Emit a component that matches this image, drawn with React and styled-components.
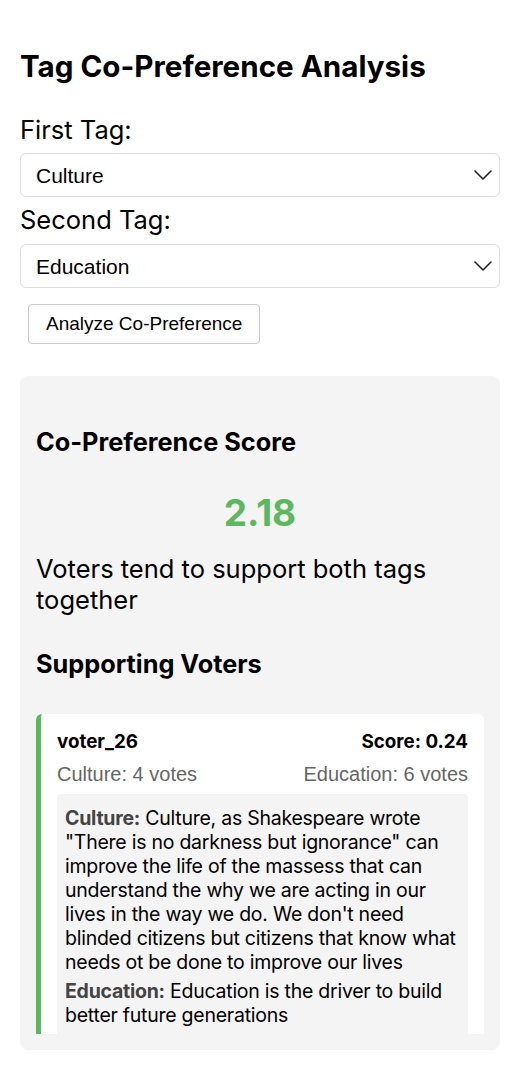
import React, { useState } from 'react'
import styled, { createGlobalStyle } from 'styled-components'

const GlobalStyle = createGlobalStyle`
 body {
  margin: 0;
  background: #ffffff;
  font-family: Inter, "Noto Sans", sans-serif;
  color: #000;
 }
`

const Page = styled.div`
 padding: 48px 20px 20px;
 display: flex;
 flex-direction: column;
`

const Title = styled.h1`
 margin: 0;
 font-size: 29.6px;
 line-height: 36px;
 font-weight: 700;
`

const Label = styled.label`
 display: block;
 margin-top: ${({ $top }) => $top}px;
 font-size: 25.5px;
 line-height: 29px;
`

const SelectWrap = styled.div`
 position: relative;
 margin-top: ${({ $top }) => $top}px;
`

const Select = styled.select`
 appearance: none;
 -webkit-appearance: none;
 width: 100%;
 height: 44px;
 box-sizing: border-box;
 border: 1px solid #dddddd;
 border-radius: 6px;
 background: #fff;
 padding: 0 40px 0 15px;
 font-family: "Liberation Sans", Arial, sans-serif;
 font-size: 21px;
 color: #000;
 outline: none;
`

const Chevron = styled.svg`
 position: absolute;
 right: 8px;
 top: 17px;
 pointer-events: none;
`

const Button = styled.button`
 align-self: flex-start;
 margin: 16px 0 0 8px;
 height: 40px;
 padding: 0 17px;
 background: #fff;
 border: 1px solid #cccccc;
 border-radius: 4px;
 font-family: "Liberation Sans", Arial, sans-serif;
 font-size: 19px;
 color: #000;
 cursor: pointer;
`

const Panel = styled.section`
 margin-top: 32px;
 background: #f4f4f4;
 border-radius: 8px;
 padding: 50px 16px 16px;
`

const Heading = styled.h3`
 margin: ${({ $top }) => $top || 0}px 0 0;
 font-size: 25.3px;
 line-height: 32px;
 font-weight: 700;
`

const ScoreValue = styled.div`
 margin-top: 33px;
 text-align: center;
 font-size: 37px;
 line-height: 44px;
 font-weight: 700;
 color: #5cb85c;
`

const Verdict = styled.p`
 margin: 18px 0 0;
 font-size: 25.5px;
 line-height: 31px;
`

const VoterList = styled.div`
 margin-top: 34px;
 max-height: 320px;
 overflow: hidden;
 display: flex;
 flex-direction: column;
 gap: 12px;
`

const Card = styled.div`
 background: #fff;
 border-left: 5px solid #5cb85c;
 border-radius: 6px;
 padding: 16px;
`

const Row = styled.div`
 display: flex;
 justify-content: space-between;
 align-items: baseline;
 margin-top: ${({ $top }) => $top || 0}px;
 line-height: 24px;
`

const Name = styled.span`
 font-size: 18.8px;
 font-weight: 700;
`

const Votes = styled.span`
 font-family: "Liberation Sans", Arial, sans-serif;
 font-size: 20px;
 color: #666666;
`

const Comments = styled.div`
 margin-top: 8px;
 background: #f4f4f4;
 border-radius: 4px;
 padding: 12px 7px 12px 8px;
 display: flex;
 flex-direction: column;
 gap: 5px;
`

const Comment = styled.p`
 margin: 0;
 font-size: 19.5px;
 letter-spacing: -0.25px;
 line-height: 24px;
`

const TagName = styled.strong`
 color: #444444;
`

const tags = ['Culture', 'Education', 'Environment', 'Health', 'Mobility']

const voters = [
  {
    id: 'voter_26',
    score: 0.24,
    first: 4,
    second: 6,
    firstText: 'Culture, as Shakespeare wrote "There is no darkness but ignorance" can improve the life of the massess that can understand the why we are acting in our lives in the way we do. We don\'t need blinded citizens but citizens that know what needs ot be done to improve our lives',
    secondText: 'Education is the driver to build better future generations',
  },
]

const TagSelect = ({ value, onChange, top }) => (
  <SelectWrap $top={top}>
    <Select value={value} onChange={e => onChange(e.target.value)}>
      {tags.map(t => <option key={t} value={t}>{t}</option>)}
    </Select>
    <Chevron width="18" height="10" viewBox="0 0 18 10" fill="none">
      <polyline points="1,1 9,9 17,1" stroke="#222" strokeWidth="1.6" strokeLinecap="round" strokeLinejoin="round" />
    </Chevron>
  </SelectWrap>
)

const App = () => {
  const [first, setFirst] = useState('Culture')
  const [second, setSecond] = useState('Education')

  return (
    <Page>
      <GlobalStyle />
      <Title>Tag Co-Preference Analysis</Title>
      <Label $top={31}>First Tag:</Label>
      <TagSelect value={first} onChange={setFirst} top={9} />
      <Label $top={8}>Second Tag:</Label>
      <TagSelect value={second} onChange={setSecond} top={10} />
      <Button>Analyze Co-Preference</Button>

      <Panel>
        <Heading>Co-Preference Score</Heading>
        <ScoreValue>2.18</ScoreValue>
        <Verdict>Voters tend to support both tags together</Verdict>
        <Heading $top={33}>Supporting Voters</Heading>
        <VoterList>
          {voters.map(v => (
            <Card key={v.id}>
              <Row>
                <Name>{v.id}</Name>
                <Name>Score: {v.score.toFixed(2)}</Name>
              </Row>
              <Row $top={8}>
                <Votes>{first}: {v.first} votes</Votes>
                <Votes>{second}: {v.second} votes</Votes>
              </Row>
              <Comments>
                <Comment><TagName>{first}:</TagName> {v.firstText}</Comment>
                <Comment><TagName>{second}:</TagName> {v.secondText}</Comment>
              </Comments>
            </Card>
          ))}
        </VoterList>
      </Panel>
    </Page>
  )
}

export default App
